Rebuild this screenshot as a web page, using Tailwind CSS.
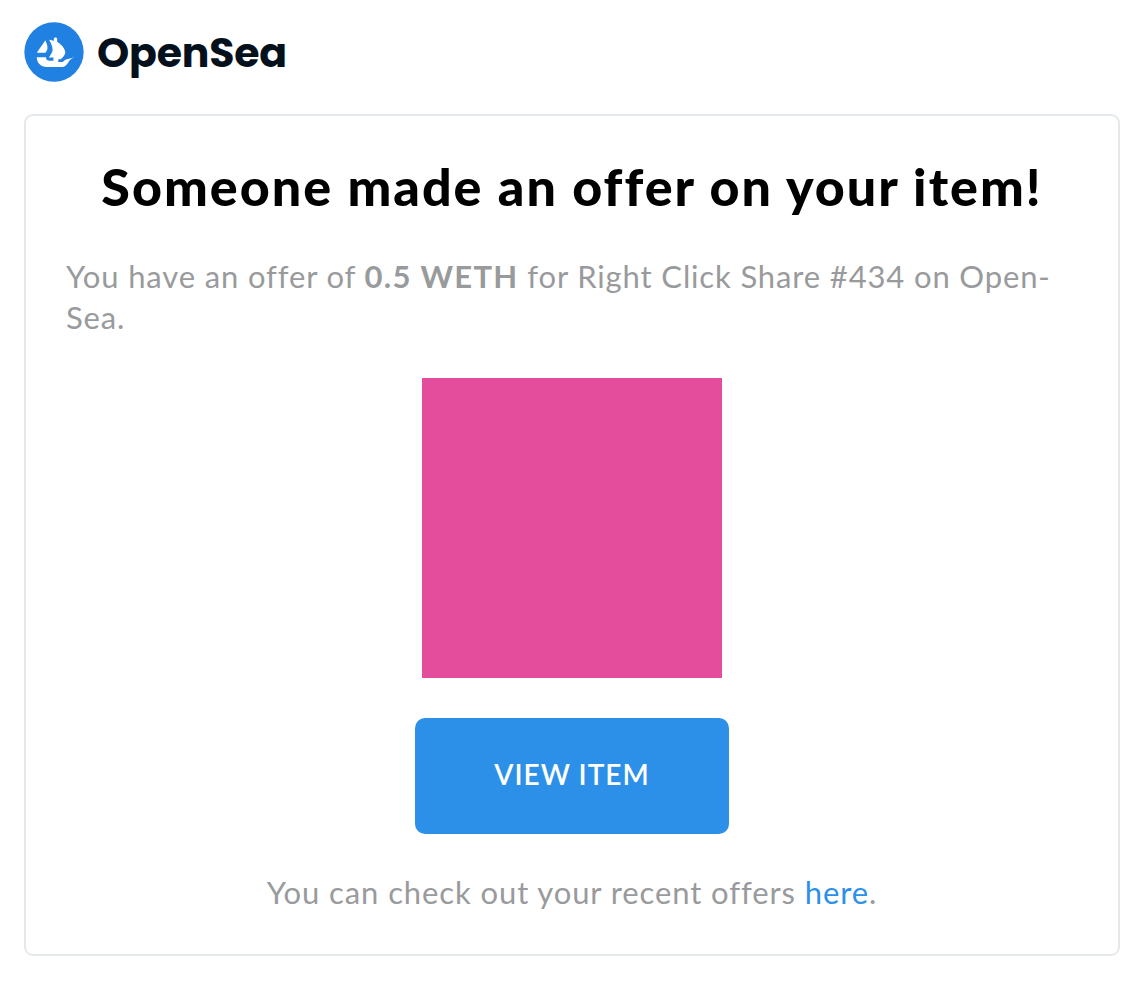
<!DOCTYPE html>
<html lang="en">
<head>
    <meta charset="UTF-8">
    <title>OpenSea offer</title>
    <script src="https://cdn.jsdelivr.net/npm/@tailwindcss/browser@4"></script>
</head>
<body class="bg-white font-['Lato',sans-serif] w-[1146px] h-[988px] overflow-hidden">
    <div class="flex items-start gap-[13px] pl-[24px] pt-[22px] h-[114px]">
        <svg class="w-[60px] h-[60px]" viewBox="0 0 90 90">
            <circle cx="45" cy="45" r="44.5" fill="#2081e2"/>
            <g transform="translate(0 1.35) scale(1 .925)">
                <path fill="#fff" d="M19.7 47.500l.2-.3 11.700-18.300c.2-.3.6-.2.7.1 1.900 4.400 3.600 9.900 2.800 13.300-.3 1.400-1.300 3.300-2.400 5.100-.1.300-.3.500-.4.800-.1.100-.2.200-.3.200H20c-.3 0-.5-.3-.3-.6z"/>
                <path fill="#fff" d="M74.600 53.300v2.900c0 .2-.1.3-.3.4-.9.4-4 1.800-5.300 3.600-3.300 4.600-5.800 11.200-11.400 11.200H34.200C25.900 71.500 19.200 64.700 19.200 56.400v-.3c0-.2.2-.4.4-.4h13c.3 0 .5.200.5.500-.1.800.1 1.700.4 2.500.8 1.600 2.400 2.600 4.200 2.600h6.400v-5h-6.300c-.3 0-.5-.4-.3-.6.1-.1.100-.2.200-.3.600-.8 1.400-2.100 2.300-3.600.6-1 1.100-2.100 1.600-3.200.1-.2.200-.4.200-.6.100-.4.300-.7.400-1 .1-.3.200-.5.200-.8.200-.9.400-1.800.400-2.800 0-.4 0-.8-.1-1.200 0-.4-.1-.8-.1-1.200 0-.4-.1-.7-.2-1.100-.1-.5-.2-1.100-.3-1.600l0-.2c-.1-.4-.2-.7-.3-1.100-.3-1.100-.7-2.200-1.100-3.200-.1-.4-.3-.8-.5-1.200-.2-.6-.5-1.100-.7-1.600-.1-.2-.2-.4-.3-.6-.1-.2-.2-.5-.3-.7-.1-.2-.2-.3-.2-.5l-.8-1.400c-.1-.2.100-.4.300-.4l4.900 1.300.6.200.7.200.3.100v-2.900c0-1.400 1.100-2.500 2.500-2.500.7 0 1.300.3 1.800.7.500.5.700 1.100.7 1.800v4.300l.5.100s.1 0 .1.100c.1.100.3.300.5.400.2.100.4.300.7.500.5.400 1.100.9 1.800 1.500.2.200.4.300.5.500.8.800 1.800 1.700 2.700 2.800.3.300.5.600.8.900.3.300.5.700.7 1 .3.400.7.900.9 1.300.1.200.3.400.4.700.4.600.7 1.200 1 1.800.1.300.3.600.4.900.4.800.6 1.600.8 2.400.1.200.1.400.1.500v.1c.1.200.1.500.1.700.1.800.1 1.500 0 2.300 0 .3-.1.600-.2.900-.1.300-.2.600-.3.900-.2.600-.5 1.200-.9 1.800-.1.200-.3.400-.4.600-.1.200-.3.400-.4.600-.2.300-.4.500-.6.800-.2.200-.3.500-.5.700-.3.300-.5.700-.8 1-.2.200-.3.400-.5.600-.2.200-.4.400-.5.600-.3.300-.5.500-.7.700l-.5.400c-.1.100-.2.100-.3.100h-3.700v4.800h4.700c1 0 2-.4 2.800-1 .3-.2 1.400-1.200 2.800-2.700.1-.1.100-.1.200-.1l12.800-3.700c.2-.1.500.1.500.4z"/>
            </g>
        </svg>
        <span class="font-['Poppins','Inter',sans-serif] font-bold text-[41px] leading-[62px] tracking-[-0.2px] text-[#04111d]">OpenSea</span>
    </div>
    <div class="ml-[24px] w-[1096px] h-[842px] border-2 border-[#e5e9ec] rounded-[9px] px-[40px] flex flex-col items-center">
        <h1 class="mt-[42px] text-[52px] leading-[56px] font-black tracking-[2px] text-black whitespace-nowrap">Someone made an offer on your item!</h1>
        <p class="mt-[42px] self-start text-[31px] leading-[41px] tracking-[0.86px] text-[#999a9c] whitespace-nowrap">You have an offer of <b class="font-bold tracking-[1.3px]">0.5 WETH</b> for Right Click Share #434 on Open-<br>Sea.</p>
        <div class="mt-[40px] w-[300px] h-[300px] bg-[#e44d9b]"></div>
        <a class="mt-[40px] w-[314px] h-[116px] pb-[4px] rounded-[10px] bg-[#2d90e8] flex items-center justify-center text-white text-[28px] font-semibold tracking-[1px]">VIEW ITEM</a>
        <p class="mt-[38px] text-[31px] leading-[41px] tracking-[0.9px] text-[#999a9c] whitespace-nowrap">You can check out your recent offers <a class="text-[#2d90e8]">here</a>.</p>
    </div>
</body>
</html>
